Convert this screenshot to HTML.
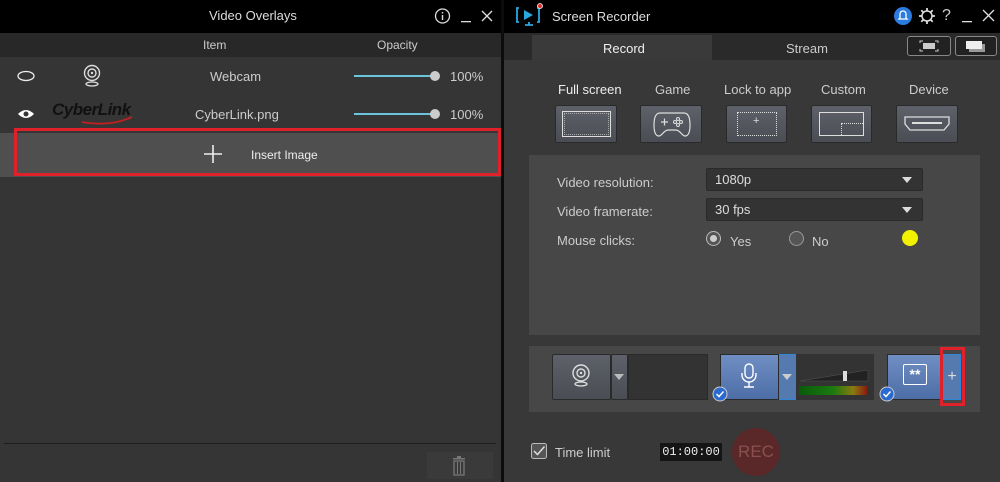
<!DOCTYPE html>
<html><head><meta charset="utf-8"><style>
*{margin:0;padding:0;box-sizing:border-box}
body{width:1000px;height:482px;overflow:hidden;background:#1a1a1a;font-family:"Liberation Sans",sans-serif;color:#ccc;font-size:13px;position:relative}
.a{position:absolute}
.t{position:absolute;white-space:nowrap}
.btn{position:absolute;background:linear-gradient(#5e6169,#4a4d54);border:1px solid #2a2a2a;border-radius:2px}
.dd{position:absolute;background:#333;border:1px solid #2a2a2a;border-radius:2px;color:#ddd;font-size:13px;padding:3px 0 0 8px}
.dd:after{content:"";position:absolute;right:10px;top:8px;border:5px solid transparent;border-top:6px solid #ddd;border-bottom:0}
</style></head><body>
<!-- LEFT -->
<div class="a" style="left:0;top:0;width:501px;height:482px;background:#353535"></div>
<div class="a" style="left:0;top:0;width:501px;height:33px;background:#000"></div>
<div class="t" style="left:209px;top:8px;color:#ddd;font-size:13px">Video Overlays</div>
<svg class="a" style="left:434px;top:8px" width="60" height="18"><circle cx="8.5" cy="8" r="7" fill="none" stroke="#ddd" stroke-width="1.3"/><rect x="7.8" y="7" width="1.4" height="5" fill="#ddd"/><rect x="7.8" y="4" width="1.4" height="1.5" fill="#ddd"/><rect x="27" y="13" width="10" height="1.3" fill="#ddd"/><path d="M48 3l10 10M58 3l-10 10" stroke="#ddd" stroke-width="1.3"/></svg>
<div class="a" style="left:0;top:33px;width:501px;height:24px;background:#282828"></div>
<div class="t" style="left:203px;top:38px;font-size:12px;color:#ccc">Item</div>
<div class="t" style="left:377px;top:38px;font-size:12px;color:#ccc">Opacity</div>
<svg class="a" style="left:16px;top:70px" width="20" height="12"><ellipse cx="10" cy="6" rx="8" ry="4.5" fill="none" stroke="#eee" stroke-width="1.3"/></svg>
<svg class="a" style="left:82px;top:64px" width="20" height="24"><circle cx="10" cy="9" r="7.5" fill="none" stroke="#ddd" stroke-width="1.4"/><circle cx="10" cy="9" r="4" fill="none" stroke="#ddd" stroke-width="1.4"/><circle cx="10" cy="9" r="1.2" fill="#ddd"/><ellipse cx="10" cy="20" rx="6" ry="2" fill="none" stroke="#ddd" stroke-width="1.3"/></svg>
<div class="t" style="left:210px;top:69px;color:#ccc">Webcam</div>
<div class="a" style="left:354px;top:75px;width:80px;height:2px;background:#6cc4dc"></div>
<div class="a" style="left:430px;top:71px;width:10px;height:10px;border-radius:50%;background:#ccc"></div>
<div class="t" style="left:450px;top:69px;color:#ccc">100%</div>
<svg class="a" style="left:16px;top:108px" width="20" height="12"><path d="M2 6Q10-2 18 6Q10 14 2 6Z" fill="#fff"/><circle cx="10" cy="6" r="2.5" fill="#353535"/></svg>
<div class="t" style="left:52px;top:100px;font-size:17px;font-style:italic;font-weight:bold;color:#111;letter-spacing:-0.5px">CyberLink</div>
<svg class="a" style="left:80px;top:114px" width="55" height="12"><path d="M2 8Q30 13 52 3" stroke="#c02020" stroke-width="1.8" fill="none"/></svg>
<div class="t" style="left:195px;top:107px;color:#ccc">CyberLink.png</div>
<div class="a" style="left:354px;top:113px;width:80px;height:2px;background:#6cc4dc"></div>
<div class="a" style="left:430px;top:109px;width:10px;height:10px;border-radius:50%;background:#ccc"></div>
<div class="t" style="left:450px;top:107px;color:#ccc">100%</div>
<div class="a" style="left:0;top:133px;width:501px;height:44px;background:#4f4f4f"></div>
<div class="a" style="left:14px;top:128px;width:487px;height:48px;border:3px solid #e0202a"></div>
<svg class="a" style="left:204px;top:145px" width="18" height="18"><path d="M9 0v18M0 9h18" stroke="#eee" stroke-width="1.6"/></svg>
<div class="t" style="left:251px;top:148px;color:#eee;font-size:12px">Insert Image</div>
<div class="a" style="left:4px;top:443px;width:492px;height:1px;background:#1e1e1e"></div>
<div class="a" style="left:427px;top:452px;width:66px;height:27px;background:#3a3a3a"></div>
<svg class="a" style="left:451px;top:456px" width="16" height="20"><rect x="2" y="2" width="12" height="1.5" fill="#777"/><rect x="6" y="0" width="4" height="2" fill="#777"/><path d="M3 5h10v14H3z" fill="none" stroke="#777" stroke-width="1.3"/><path d="M6.5 6v12M9.5 6v12" stroke="#777"/></svg>
<div class="a" style="left:501px;top:0;width:3px;height:482px;background:#0c0c0c"></div>
<!-- RIGHT -->
<div class="a" style="left:504px;top:0;width:496px;height:482px;background:#383838"></div>
<div class="a" style="left:504px;top:0;width:496px;height:33px;background:#000"></div>
<svg class="a" style="left:515px;top:3px" width="30" height="26"><path d="M4 5h-2v14h2M22 5h2v14h-2M10 22h8M14 19v3" stroke="#29a8e0" stroke-width="1.8" fill="none"/><path d="M9 7l9 5-9 5z" fill="#29a8e0"/><circle cx="25" cy="3" r="2.5" fill="#e03030" stroke="#fff" stroke-width="0.8"/></svg>
<div class="t" style="left:552px;top:9px;color:#ddd;font-size:13px">Screen Recorder</div>
<div class="a" style="left:894px;top:7px;width:18px;height:18px;border-radius:50%;background:#2a7ce0"></div>
<svg class="a" style="left:897px;top:9px" width="12" height="14"><path d="M3 9V5a3 3 0 016 0v4l1 1H2z" fill="none" stroke="#fff" stroke-width="1.3"/></svg>
<svg class="a" style="left:917px;top:6px" width="20" height="20"><circle cx="10" cy="10" r="5" fill="none" stroke="#ddd" stroke-width="1.5"/><path d="M10 2v3M10 15v3M2 10h3M15 10h3M4.3 4.3l2.1 2.1M13.6 13.6l2.1 2.1M4.3 15.7l2.1-2.1M13.6 6.4l2.1-2.1" stroke="#ddd" stroke-width="1.8"/></svg>
<div class="t" style="left:942px;top:7px;color:#ccc;font-size:16px">?</div>
<svg class="a" style="left:960px;top:8px" width="38" height="16"><rect x="2" y="13" width="10" height="1.3" fill="#ddd"/><path d="M23 2l11 11M34 2l-11 11" stroke="#ddd" stroke-width="1.3"/></svg>
<div class="a" style="left:504px;top:33px;width:496px;height:27px;background:#2a2a2a"></div>
<div class="a" style="left:532px;top:35px;width:180px;height:25px;background:#3a3a3a"></div>
<div class="t" style="left:603px;top:41px;color:#eee">Record</div>
<div class="t" style="left:786px;top:41px;color:#ccc">Stream</div>
<div class="a" style="left:907px;top:36px;width:44px;height:20px;border:1px solid #888;border-radius:3px;background:#222"></div>
<svg class="a" style="left:919px;top:40px" width="20" height="12"><rect x="4" y="3" width="12" height="6" fill="#ccc"/><path d="M1 3V1h3M16 1h3v2M1 9v2h3M16 11h3V9" stroke="#ccc" fill="none"/></svg>
<div class="a" style="left:955px;top:36px;width:42px;height:20px;border:1px solid #888;border-radius:3px;background:#222"></div>
<svg class="a" style="left:965px;top:40px" width="22" height="13"><rect x="4" y="4" width="16" height="8" fill="#999"/><rect x="1" y="1" width="16" height="8" fill="#eee"/></svg>
<div class="t" style="left:558px;top:82px;color:#eee">Full screen</div>
<div class="t" style="left:655px;top:82px;color:#ccc">Game</div>
<div class="t" style="left:724px;top:82px;color:#ccc">Lock to app</div>
<div class="t" style="left:821px;top:82px;color:#ccc">Custom</div>
<div class="t" style="left:909px;top:82px;color:#ccc">Device</div>
<div class="btn" style="left:555px;top:105px;width:62px;height:38px"></div>
<div class="a" style="left:562px;top:111px;width:49px;height:26px;border:1px solid #ddd;outline:1px dotted #aaa;outline-offset:-3px"></div>
<div class="btn" style="left:640px;top:105px;width:62px;height:38px"></div>
<svg class="a" style="left:652px;top:110px" width="40" height="28"><path d="M8 3h24c4 0 6 4 6 12s-2 11-5 11c-3 0-5-6-9-6h-8c-4 0-6 6-9 6s-5-3-5-11 2-12 6-12z" fill="none" stroke="#ddd" stroke-width="1.2"/><path d="M9 12h7M12.5 8.5v7" stroke="#ddd" stroke-width="1.2"/><circle cx="26" cy="9" r="1.5" fill="none" stroke="#ddd"/><circle cx="29" cy="12" r="1.5" fill="none" stroke="#ddd"/><circle cx="23" cy="12" r="1.5" fill="none" stroke="#ddd"/><circle cx="26" cy="15" r="1.5" fill="none" stroke="#ddd"/></svg>
<div class="btn" style="left:726px;top:105px;width:61px;height:38px"></div>
<div class="a" style="left:737px;top:112px;width:40px;height:24px;border:1px dotted #ddd"></div>
<div class="t" style="left:753px;top:115px;color:#ddd;font-size:11px">+</div>
<div class="btn" style="left:811px;top:105px;width:61px;height:38px"></div>
<div class="a" style="left:819px;top:112px;width:45px;height:24px;border:1px solid #ddd"></div>
<div class="a" style="left:841px;top:123px;width:22px;height:12px;border-top:1px dotted #ddd;border-left:1px dotted #ddd"></div>
<div class="btn" style="left:896px;top:105px;width:62px;height:38px"></div>
<svg class="a" style="left:903px;top:115px" width="48" height="18"><path d="M2 2h44v7l-5 6H7L2 9z" fill="none" stroke="#ddd" stroke-width="1.3"/><rect x="9" y="7" width="30" height="2" fill="#ddd"/></svg>
<div class="a" style="left:529px;top:155px;width:451px;height:180px;background:#474747"></div>
<div class="t" style="left:557px;top:175px;color:#ccc">Video resolution:</div>
<div class="dd" style="left:706px;top:168px;width:217px;height:23px">1080p</div>
<div class="t" style="left:557px;top:204px;color:#ccc">Video framerate:</div>
<div class="dd" style="left:706px;top:198px;width:217px;height:23px">30 fps</div>
<div class="t" style="left:557px;top:233px;color:#ccc">Mouse clicks:</div>
<div class="a" style="left:706px;top:231px;width:15px;height:15px;border-radius:50%;border:1px solid #bbb;background:#555"></div>
<div class="a" style="left:710px;top:235px;width:7px;height:7px;border-radius:50%;background:#ccc"></div>
<div class="t" style="left:730px;top:234px;color:#ccc">Yes</div>
<div class="a" style="left:789px;top:231px;width:15px;height:15px;border-radius:50%;border:1px solid #999;background:#555"></div>
<div class="t" style="left:812px;top:234px;color:#ccc">No</div>
<div class="a" style="left:902px;top:230px;width:16px;height:16px;border-radius:50%;background:#f2f200"></div>
<div class="a" style="left:529px;top:346px;width:451px;height:66px;background:#474747"></div>
<div class="btn" style="left:552px;top:354px;width:59px;height:46px"></div>
<svg class="a" style="left:571px;top:363px" width="20" height="26"><circle cx="10" cy="10" r="8" fill="none" stroke="#ddd" stroke-width="1.4"/><circle cx="10" cy="10" r="4" fill="none" stroke="#ddd" stroke-width="1.4"/><circle cx="10" cy="10" r="1.2" fill="#ddd"/><ellipse cx="10" cy="21" rx="6" ry="2" fill="none" stroke="#ddd" stroke-width="1.3"/></svg>
<div class="btn" style="left:611px;top:354px;width:17px;height:46px"></div>
<div class="a" style="left:614px;top:374px;border:5px solid transparent;border-top:6px solid #bbb"></div>
<div class="a" style="left:628px;top:354px;width:80px;height:46px;background:#333;border:1px solid #2a2a2a"></div>
<div class="a" style="left:720px;top:354px;width:59px;height:46px;background:linear-gradient(#6f8fc4,#4d6da6);border:1px solid #2a2a2a"></div>
<svg class="a" style="left:739px;top:363px" width="20" height="28"><rect x="6" y="1" width="8" height="14" rx="4" fill="none" stroke="#fff" stroke-width="1.4"/><path d="M3 10v2a7 7 0 0014 0v-2M10 19v5M5 24h10" stroke="#fff" stroke-width="1.4" fill="none"/></svg>
<div class="a" style="left:779px;top:354px;width:17px;height:46px;background:#557ab0;border:1px solid #2a86d8"></div>
<div class="a" style="left:782px;top:374px;border:5px solid transparent;border-top:6px solid #ccc"></div>
<div class="a" style="left:796px;top:354px;width:78px;height:46px;background:#333"></div>
<svg class="a" style="left:798px;top:365px" width="72" height="17"><path d="M2 16L70 5v11z" fill="#222" stroke="#555" stroke-width="0.5"/><rect x="45" y="6" width="4" height="10" fill="#ddd"/></svg>
<div class="a" style="left:799px;top:386px;width:68px;height:9px;background:linear-gradient(90deg,#0a5a0a,#1a7a10 50%,#8a7a10 80%,#8a1a10)"></div>
<div class="a" style="left:887px;top:354px;width:56px;height:46px;background:linear-gradient(#6f8fc4,#4d6da6);border:1px solid #2a2a2a"></div>
<div class="a" style="left:903px;top:364px;width:24px;height:21px;border:1px solid #fff;border-radius:2px;color:#fff;font-size:14px;line-height:18px;text-align:center;font-weight:bold">**</div>
<div class="a" style="left:943px;top:354px;width:18px;height:46px;background:#557ab0;border:1px solid #2a86d8;color:#ddd;text-align:center;line-height:44px;font-size:16px">+</div>
<div class="a" style="left:940px;top:347px;width:25px;height:59px;border:3px solid #e0202a"></div>
<svg class="a" style="left:712px;top:386px" width="16" height="16"><circle cx="8" cy="8" r="7" fill="#2a6ad0" stroke="#ccc"/><path d="M4.5 8l2.5 2.5 4.5-5" stroke="#fff" stroke-width="1.5" fill="none"/></svg>
<svg class="a" style="left:879px;top:386px" width="16" height="16"><circle cx="8" cy="8" r="7" fill="#2a6ad0" stroke="#ccc"/><path d="M4.5 8l2.5 2.5 4.5-5" stroke="#fff" stroke-width="1.5" fill="none"/></svg>
<svg class="a" style="left:531px;top:443px" width="16" height="16"><rect x="0.5" y="0.5" width="15" height="15" rx="2" fill="#555" stroke="#bbb"/><path d="M3 8l3.5 3.5 7-8" stroke="#ddd" stroke-width="1.5" fill="none"/></svg>
<div class="t" style="left:555px;top:445px;color:#ccc">Time limit</div>
<div class="a" style="left:660px;top:443px;width:62px;height:18px;background:#151515;color:#eee;font-family:'Liberation Mono',monospace;font-size:12px;line-height:18px;text-align:center">01:00:00</div>
<div class="a" style="left:732px;top:428px;width:48px;height:48px;border-radius:50%;background:#5a2828;color:#8a5050;font-size:17px;line-height:48px;text-align:center">REC</div>
</body></html>
